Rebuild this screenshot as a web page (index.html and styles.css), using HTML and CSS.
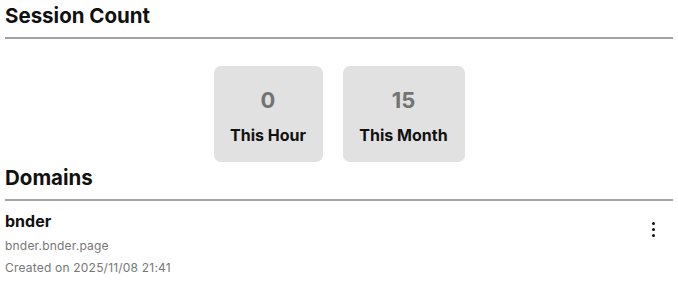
FILE: index.html
```html
<!DOCTYPE html>
<html>
<head>
<meta charset="utf-8">
<link rel="stylesheet" href="styles.css">
</head>
<body>
<section class="section">
  <h2 class="section-title">Session Count</h2>
  <div class="stats">
    <div class="stat stat-hour">
      <div class="stat-value">0</div>
      <div class="stat-label">This Hour</div>
    </div>
    <div class="stat stat-month">
      <div class="stat-value">15</div>
      <div class="stat-label">This Month</div>
    </div>
  </div>
</section>
<section class="section">
  <h2 class="section-title">Domains</h2>
  <div class="domain">
    <div class="domain-info">
      <div class="domain-name">bnder</div>
      <div class="domain-meta">bnder.bnder.page</div>
      <div class="domain-meta">Created on 2025/11/08 21:41</div>
    </div>
    <button class="menu-btn" aria-label="More">
      <span class="dot"></span><span class="dot"></span><span class="dot"></span>
    </button>
  </div>
</section>
</body>
</html>
```
FILE: styles.css
```css
html, body {
  margin: 0;
  padding: 0;
  background: #fff;
}
body {
  font-family: Inter, "Noto Sans", sans-serif;
  color: #111;
  padding: 0 5px;
}
.section-title {
  margin: 0;
  font-size: 20.5px;
  font-weight: 700;
  line-height: 24px;
  padding-top: 4px;
  padding-bottom: 9px;
  border-bottom: 2px solid #a3a3a3;
}
.stats {
  display: flex;
  justify-content: center;
  gap: 20px;
  margin-top: 27px;
}
.stat {
  background: #e1e1e1;
  border-radius: 7px;
  height: 96px;
  box-sizing: border-box;
  padding-top: 3px;
  display: flex;
  flex-direction: column;
  align-items: center;
  justify-content: center;
  gap: 13px;
}
.stat-hour { width: 109px; }
.stat-month { width: 122px; }
.stat-value {
  font-size: 22px;
  font-weight: 700;
  color: #737373;
  line-height: 26px;
}
.stat-label {
  font-size: 16px;
  font-weight: 700;
  color: #111;
  line-height: 19px;
}
.domain {
  display: flex;
  justify-content: space-between;
  align-items: flex-start;
  padding-top: 10px;
}
.domain-name {
  font-size: 16px;
  font-weight: 700;
  line-height: 20px;
  margin-bottom: 4px;
}
.domain-meta {
  font-size: 12px;
  letter-spacing: 0.2px;
  color: #777;
  line-height: 22px;
}
.menu-btn {
  background: none;
  border: 0;
  padding: 0;
  margin: 11px 18px 0 0;
  display: flex;
  flex-direction: column;
  gap: 3px;
  cursor: pointer;
}
.dot {
  width: 3px;
  height: 3px;
  border-radius: 50%;
  background: #111;
}
```
